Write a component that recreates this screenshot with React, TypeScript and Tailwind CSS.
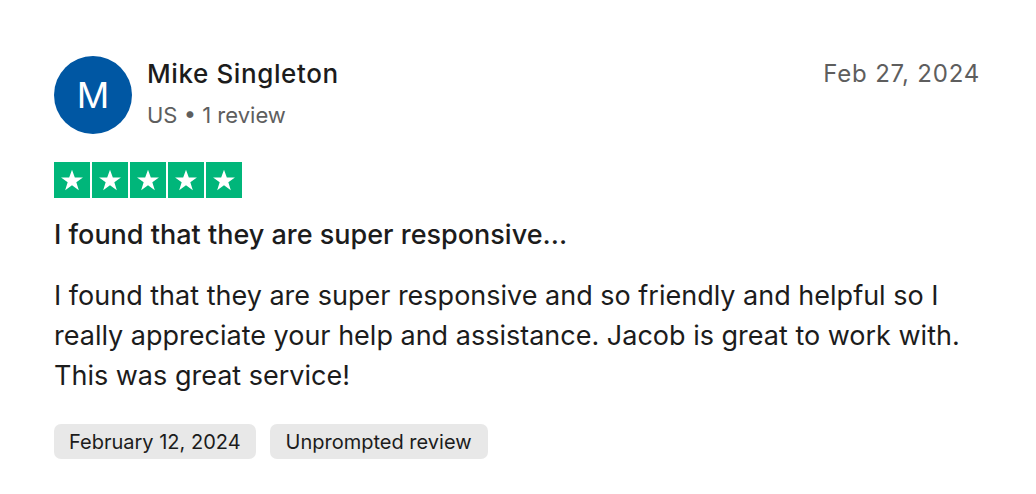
import React from 'react';

function Star() {
  return (
    <div className="w-[36px] h-[36px] bg-[#00b67a] flex items-center justify-center">
      <svg width="26" height="26" viewBox="0 0 24 24">
        <path d="M12 2.5l2.6 7.1h7.5l-6.1 4.5 2.3 7.3L12 16.9l-6.3 4.5 2.3-7.3-6.1-4.5h7.5z" fill="#fff" />
      </svg>
    </div>
  );
}

export default function App() {
  return (
    <div className="w-[1036px] h-[494px] bg-white text-[#1c1c1c]" style={{ fontFamily: 'Inter, "Noto Sans", sans-serif' }}>
      <div className="pt-[56px] pl-[54px] pr-[56px]">
        <div className="flex items-start">
          <div className="w-[78px] h-[78px] rounded-full bg-[#0057a3] text-white flex items-center justify-center text-[36px] shrink-0">
            M
          </div>
          <div className="ml-[15px] mt-[2px] flex-1">
            <div className="text-[26px] font-medium leading-[32px] tracking-[0.6px]">Mike Singleton</div>
            <div className="text-[22px] leading-[28px] mt-[11px] text-[#5e5e5e]">US • 1 review</div>
          </div>
          <div className="text-[24px] text-[#5e5e5e] mt-[2px] leading-[32px] tracking-[0.8px]">Feb 27, 2024</div>
        </div>
        <div className="flex gap-[2px] mt-[28px]">
          <Star />
          <Star />
          <Star />
          <Star />
          <Star />
        </div>
        <div className="text-[27px] font-medium mt-[22px] leading-[30px]">I found that they are super responsive...</div>
        <p className="text-[27px] leading-[40px] mt-[26px] w-[910px]">
          I found that they are super responsive and so friendly and helpful so I really appreciate your help and assistance. Jacob is great to work with. This was great service!
        </p>
        <div className="flex gap-[14px] mt-[28px]">
          <span className="bg-[#e8e8e8] rounded-[7px] h-[35px] px-[15px] flex items-center text-[20px]">February 12, 2024</span>
          <span className="bg-[#e8e8e8] rounded-[7px] h-[35px] px-[16px] flex items-center text-[20px]">Unprompted review</span>
        </div>
      </div>
    </div>
  );
}
